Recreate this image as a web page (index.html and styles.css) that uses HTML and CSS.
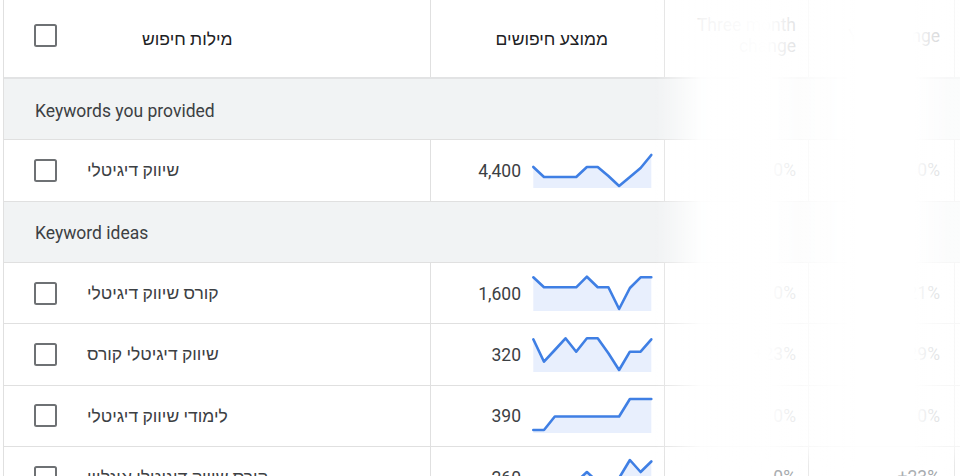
FILE: index.html
```html
<!DOCTYPE html>
<html lang="he">
<head>
<meta charset="utf-8">
<title>Keyword ideas</title>
<link rel="stylesheet" href="styles.css">
</head>
<body>
<div class="table">
  <div class="row head">
    <div class="cell c1"><span class="cb"></span><span class="hlabel">מילות חיפוש</span></div>
    <div class="cell c2"><span class="hlabel2">ממוצע חיפושים</span></div>
    <div class="cell c3 num"><span class="hnum">Three month<br>change</span></div>
    <div class="cell c4 num"><span class="hnum">YoY change</span></div>
    <div class="cell c5"></div>
  </div>

  <div class="group">Keywords you provided</div>

  <div class="row">
    <div class="cell c1"><span class="cb"></span><span class="kw">שיווק דיגיטלי</span></div>
    <div class="cell c2"><span class="vol">4,400</span>
      <svg class="spark" viewBox="0 0 122 37" width="122" height="37"><polygon class="area" points="1.3,14 12,24 22.8,24 33.5,24 44.2,24 54.9,14 65.7,14 76.4,23 87.1,33 97.9,24 108.6,15 119.3,2 119.3,35 1.3,35"/><polyline class="line" points="1.3,14 12,24 22.8,24 33.5,24 44.2,24 54.9,14 65.7,14 76.4,23 87.1,33 97.9,24 108.6,15 119.3,2"/></svg>
    </div>
    <div class="cell c3 num">0%</div>
    <div class="cell c4 num">0%</div>
    <div class="cell c5"></div>
  </div>

  <div class="group">Keyword ideas</div>

  <div class="row">
    <div class="cell c1"><span class="cb"></span><span class="kw">קורס שיווק דיגיטלי</span></div>
    <div class="cell c2"><span class="vol">1,600</span>
      <svg class="spark" viewBox="0 0 122 37" width="122" height="37"><polygon class="area" points="1.3,1.3 12,11.3 22.8,11.3 33.5,11.3 44.2,11.3 54.9,0.7 65.7,11.3 76.4,11.3 87.1,33 97.9,12 108.6,1.3 119.3,1.3 119.3,35 1.3,35"/><polyline class="line" points="1.3,1.3 12,11.3 22.8,11.3 33.5,11.3 44.2,11.3 54.9,0.7 65.7,11.3 76.4,11.3 87.1,33 97.9,12 108.6,1.3 119.3,1.3"/></svg>
    </div>
    <div class="cell c3 num">0%</div>
    <div class="cell c4 num">+21%</div>
    <div class="cell c5"></div>
  </div>

  <div class="row">
    <div class="cell c1"><span class="cb"></span><span class="kw">שיווק דיגיטלי קורס</span></div>
    <div class="cell c2"><span class="vol">320</span>
      <svg class="spark" viewBox="0 0 122 37" width="122" height="37"><polygon class="area" points="1.3,2.3 12,24.7 22.8,13 33.5,1.3 44.2,14.7 54.9,1.3 65.7,1.3 76.4,16.3 87.1,33 97.9,14.7 108.6,14.7 119.3,2.3 119.3,35 1.3,35"/><polyline class="line" points="1.3,2.3 12,24.7 22.8,13 33.5,1.3 44.2,14.7 54.9,1.3 65.7,1.3 76.4,16.3 87.1,33 97.9,14.7 108.6,14.7 119.3,2.3"/></svg>
    </div>
    <div class="cell c3 num">+23%</div>
    <div class="cell c4 num">+29%</div>
    <div class="cell c5"></div>
  </div>

  <div class="row">
    <div class="cell c1"><span class="cb"></span><span class="kw">לימודי שיווק דיגיטלי</span></div>
    <div class="cell c2"><span class="vol">390</span>
      <svg class="spark" viewBox="0 0 122 37" width="122" height="37"><polygon class="area" points="1.3,32 12,32 22.8,18.5 33.5,18.5 44.2,18.5 54.9,18.5 65.7,18.5 76.4,18.5 87.1,18.5 97.9,1 108.6,1 119.3,1 119.3,35 1.3,35"/><polyline class="line" points="1.3,32 12,32 22.8,18.5 33.5,18.5 44.2,18.5 54.9,18.5 65.7,18.5 76.4,18.5 87.1,18.5 97.9,1 108.6,1 119.3,1"/></svg>
    </div>
    <div class="cell c3 num">0%</div>
    <div class="cell c4 num">0%</div>
    <div class="cell c5"></div>
  </div>

  <div class="row">
    <div class="cell c1"><span class="cb"></span><span class="kw">קורס שיווק דיגיטלי אונליין</span></div>
    <div class="cell c2"><span class="vol">260</span>
      <svg class="spark" viewBox="0 0 122 37" width="122" height="37"><polygon class="area" points="1.3,32 12,26 22.8,34 33.5,29 44.2,22 54.9,12 65.7,22 76.4,20 87.1,18 97.9,0 108.6,12 119.3,1.5 119.3,35 1.3,35"/><polyline class="line" points="1.3,32 12,26 22.8,34 33.5,29 44.2,22 54.9,12 65.7,22 76.4,20 87.1,18 97.9,0 108.6,12 119.3,1.5"/></svg>
    </div>
    <div class="cell c3 num">0%</div>
    <div class="cell c4 num">+23%</div>
    <div class="cell c5"></div>
  </div>

  <div class="fade"></div>
</div>
</body>
</html>
```

FILE: styles.css
```css
html, body {
  margin: 0;
  padding: 0;
  background: #ffffff;
  overflow: hidden;
}

body {
  width: 960px;
  height: 476px;
  font-family: Roboto, "Liberation Sans", Arial, sans-serif;
  font-size: 17.5px;
  color: #3c4043;
}

.table {
  position: relative;
  margin-left: 3px;
  border-left: 1px solid #e0e0e0;
}

.row {
  display: grid;
  grid-template-columns: 427px 234px 144px 146px 1fr;
  height: 61.33px;
  box-sizing: border-box;
  border-bottom: 1px solid #e0e0e0;
  background: #ffffff;
}

.row.head {
  height: 79px;
  border-bottom: 2px solid #e2e3e4;
  color: #202124;
}

.cell {
  display: flex;
  align-items: center;
  border-right: 1px solid #e0e0e0;
  box-sizing: border-box;
  min-width: 0;
}

.cell.c5 {
  border-right: none;
}

.c1 {
  padding-left: 30px;
}

.cb {
  flex: none;
  width: 23px;
  height: 23px;
  box-sizing: border-box;
  border: 2.5px solid #6e7174;
  border-radius: 2.5px;
  background: #fff;
}

.head .cb {
  margin-top: -7px;
}

.hlabel {
  margin-left: 85px;
  margin-top: 2px;
  color: #202124;
}

.kw {
  margin-left: 30px;
  margin-top: 1px;
  color: #3c4043;
}

.c2 {
  justify-content: flex-end;
  padding-right: 10px;
}

.head .c2 {
  padding-right: 56px;
}

.hlabel2 {
  margin-top: 2px;
  color: #202124;
}

.vol {
  margin-right: 11px;
  margin-top: 1px;
  color: #3c4043;
}

.spark {
  display: block;
  flex: none;
  margin-top: 2px;
  overflow: visible;
}

.spark .area {
  fill: #e8effd;
  stroke: none;
}

.spark .line {
  fill: none;
  stroke: #3f7fe4;
  stroke-width: 2.6;
  stroke-linejoin: round;
  stroke-linecap: round;
}

.num {
  justify-content: flex-end;
  text-align: right;
  padding-right: 12px;
  color: #80868b;
}

.c4.num {
  padding-right: 14px;
}

.hnum {
  line-height: 21px;
  color: #5f6368;
  margin-top: -5px;
}

.group {
  height: 61.33px;
  box-sizing: border-box;
  border-bottom: 1px solid #e0e0e0;
  background: #f1f3f4;
  display: flex;
  align-items: center;
  padding-left: 31px;
  padding-top: 3px;
  color: #3c4043;
}

.fade {
  position: absolute;
  top: 0;
  left: 651px;
  right: -10px;
  height: 476px;
  pointer-events: none;
  background: linear-gradient(to right,
    rgba(255,255,255,0) 0px,
    rgba(255,255,255,0.93) 46px,
    rgba(255,255,255,1) 112px,
    rgba(255,255,255,0.88) 132px,
    rgba(255,255,255,0.8) 146px,
    rgba(255,255,255,0.88) 162px,
    rgba(255,255,255,0.93) 180px,
    rgba(255,255,255,1) 200px,
    rgba(255,255,255,1) 258px,
    rgba(255,255,255,0.82) 276px,
    rgba(255,255,255,0.72) 292px,
    rgba(255,255,255,0.75) 320px);
  -webkit-mask-image: linear-gradient(to bottom, #000 0px, #000 444px, rgba(0,0,0,0.35) 466px);
  mask-image: linear-gradient(to bottom, #000 0px, #000 444px, rgba(0,0,0,0.35) 466px);
}
```
